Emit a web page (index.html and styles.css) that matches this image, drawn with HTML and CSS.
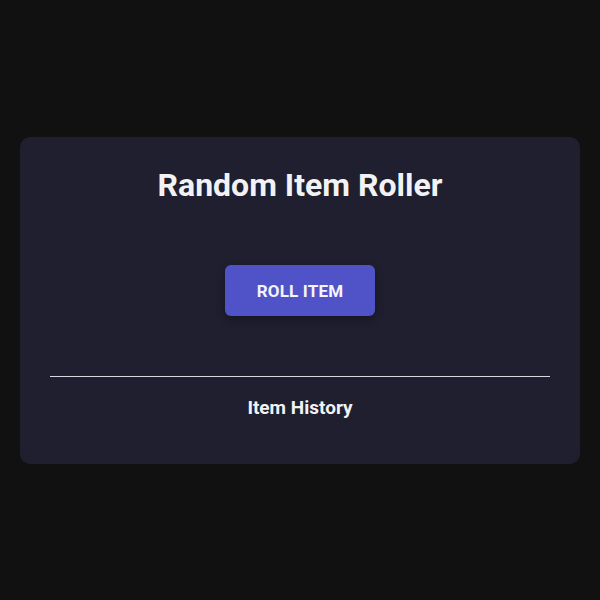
FILE: index.html
```html
<!DOCTYPE html>
<html>
<head>
<meta charset="utf-8">
<link rel="stylesheet" href="styles.css">
</head>
<body>
<div class="page">
  <div class="card">
    <h1 class="title">Random Item Roller</h1>
    <div class="actions">
      <button class="roll">ROLL ITEM</button>
    </div>
    <hr class="divider">
    <h2 class="history-title">Item History</h2>
    <ul class="history"></ul>
  </div>
</div>
</body>
</html>
```
FILE: styles.css
```css
html, body {
  margin: 0;
  padding: 0;
  background: #111111;
  font-family: Roboto, "Liberation Sans", sans-serif;
  color: #f2f2f5;
}
.page {
  width: 600px;
  height: 600px;
  box-sizing: border-box;
  padding: 137px 20px 0;
}
.card {
  background: #1f1f2f;
  border-radius: 10px;
  padding: 30px 30px 30px;
  height: 327px;
  box-sizing: border-box;
}
.title {
  margin: 0;
  font-size: 32px;
  line-height: 36px;
  font-weight: 700;
  text-align: center;
}
.actions {
  display: flex;
  justify-content: center;
  margin-top: 62px;
}
.roll {
  width: 150px;
  height: 51px;
  border: none;
  border-radius: 6px;
  background: #5053c8;
  color: #f4f4fa;
  font-family: Roboto, "Liberation Sans", sans-serif;
  font-size: 17px;
  font-weight: 700;
  letter-spacing: 0.2px;
  box-shadow: 0 3px 8px rgba(0,0,0,0.35);
  cursor: pointer;
}
.divider {
  margin: 60px 0 0;
  border: none;
  border-top: 1px solid #d8d8e0;
  height: 0;
}
.history-title {
  margin: 20px 0 0;
  font-size: 19px;
  line-height: 22px;
  font-weight: 700;
  text-align: center;
}
.history {
  margin: 0;
  padding: 0;
  list-style: none;
}
```
